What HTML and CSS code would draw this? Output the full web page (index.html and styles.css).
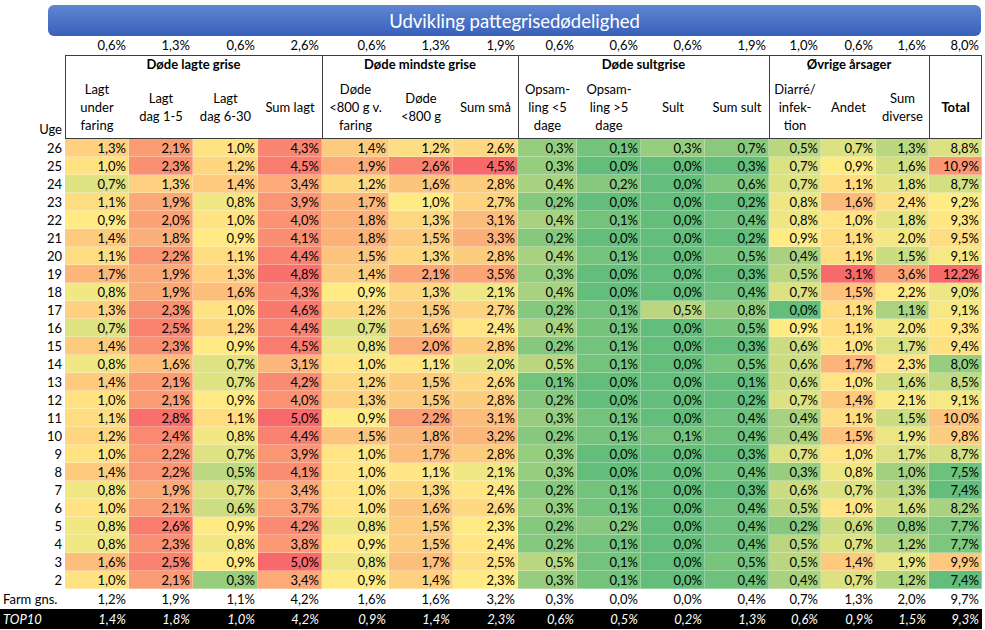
FILE: index.html
```html
<!DOCTYPE html>
<html lang="da">
<head>
<meta charset="utf-8">
<title>Udvikling pattegrisedødelighed</title>
<link rel="stylesheet" href="styles.css">
</head>
<body>
<div class="title">Udvikling pattegrisedødelighed</div>
<table class="grid">
<colgroup>
<col class="w65"><col class="w64"><col class="w64"><col class="w65"><col class="w64">
<col class="w67"><col class="w64"><col class="w65">
<col class="w59"><col class="w64"><col class="w64"><col class="w64">
<col class="w52"><col class="w55"><col class="w53"><col class="w53">
</colgroup>
<thead>
<tr class="avg"><th></th><td>0,6%</td><td>1,3%</td><td>0,6%</td><td>2,6%</td><td>0,6%</td><td>1,3%</td><td>1,9%</td><td>0,6%</td><td>0,6%</td><td>0,6%</td><td>1,9%</td><td>1,0%</td><td>0,6%</td><td>1,6%</td><td>8,0%</td></tr>
<tr class="groups"><th></th><th colspan="4" class="grp">Døde lagte grise</th><th colspan="3" class="grp">Døde mindste grise</th><th colspan="4" class="grp">Døde sultgrise</th><th colspan="3" class="grp">Øvrige årsager</th><th class="grp end"></th></tr>
<tr class="subs"><th class="uge">Uge</th>
<th class="sub first">Lagt<br>under<br>faring</th><th class="sub">Lagt<br>dag 1-5</th><th class="sub">Lagt<br>dag 6-30</th><th class="sub">Sum lagt</th>
<th class="sub first">Døde<br>&lt;800 g v.<br>faring</th><th class="sub">Døde<br>&lt;800 g</th><th class="sub">Sum små</th>
<th class="sub first">Opsam-<br>ling &lt;5<br>dage</th><th class="sub">Opsam-<br>ling &gt;5<br>dage</th><th class="sub">Sult</th><th class="sub">Sum sult</th>
<th class="sub first">Diarré/<br>infek-<br>tion</th><th class="sub">Andet</th><th class="sub">Sum<br>diverse</th>
<th class="sub first end total">Total</th></tr>
</thead>
<tbody class="heat">
<tr><th>26</th><td>1,3%</td><td>2,1%</td><td>1,0%</td><td>4,3%</td><td>1,4%</td><td>1,2%</td><td>2,6%</td><td>0,3%</td><td>0,1%</td><td>0,3%</td><td>0,7%</td><td>0,5%</td><td>0,7%</td><td>1,3%</td><td>8,8%</td></tr>
<tr><th>25</th><td>1,0%</td><td>2,3%</td><td>1,2%</td><td>4,5%</td><td>1,9%</td><td>2,6%</td><td>4,5%</td><td>0,3%</td><td>0,0%</td><td>0,0%</td><td>0,3%</td><td>0,7%</td><td>0,9%</td><td>1,6%</td><td>10,9%</td></tr>
<tr><th>24</th><td>0,7%</td><td>1,3%</td><td>1,4%</td><td>3,4%</td><td>1,2%</td><td>1,6%</td><td>2,8%</td><td>0,4%</td><td>0,2%</td><td>0,0%</td><td>0,6%</td><td>0,7%</td><td>1,1%</td><td>1,8%</td><td>8,7%</td></tr>
<tr><th>23</th><td>1,1%</td><td>1,9%</td><td>0,8%</td><td>3,9%</td><td>1,7%</td><td>1,0%</td><td>2,7%</td><td>0,2%</td><td>0,0%</td><td>0,0%</td><td>0,2%</td><td>0,8%</td><td>1,6%</td><td>2,4%</td><td>9,2%</td></tr>
<tr><th>22</th><td>0,9%</td><td>2,0%</td><td>1,0%</td><td>4,0%</td><td>1,8%</td><td>1,3%</td><td>3,1%</td><td>0,4%</td><td>0,1%</td><td>0,0%</td><td>0,4%</td><td>0,8%</td><td>1,0%</td><td>1,8%</td><td>9,3%</td></tr>
<tr><th>21</th><td>1,4%</td><td>1,8%</td><td>0,9%</td><td>4,1%</td><td>1,8%</td><td>1,5%</td><td>3,3%</td><td>0,2%</td><td>0,0%</td><td>0,0%</td><td>0,2%</td><td>0,9%</td><td>1,1%</td><td>2,0%</td><td>9,5%</td></tr>
<tr><th>20</th><td>1,1%</td><td>2,2%</td><td>1,1%</td><td>4,4%</td><td>1,5%</td><td>1,3%</td><td>2,8%</td><td>0,4%</td><td>0,1%</td><td>0,0%</td><td>0,5%</td><td>0,4%</td><td>1,1%</td><td>1,5%</td><td>9,1%</td></tr>
<tr><th>19</th><td>1,7%</td><td>1,9%</td><td>1,3%</td><td>4,8%</td><td>1,4%</td><td>2,1%</td><td>3,5%</td><td>0,3%</td><td>0,0%</td><td>0,0%</td><td>0,3%</td><td>0,5%</td><td>3,1%</td><td>3,6%</td><td>12,2%</td></tr>
<tr><th>18</th><td>0,8%</td><td>1,9%</td><td>1,6%</td><td>4,3%</td><td>0,9%</td><td>1,3%</td><td>2,1%</td><td>0,4%</td><td>0,0%</td><td>0,0%</td><td>0,4%</td><td>0,7%</td><td>1,5%</td><td>2,2%</td><td>9,0%</td></tr>
<tr><th>17</th><td>1,3%</td><td>2,3%</td><td>1,0%</td><td>4,6%</td><td>1,2%</td><td>1,5%</td><td>2,7%</td><td>0,2%</td><td>0,1%</td><td>0,5%</td><td>0,8%</td><td>0,0%</td><td>1,1%</td><td>1,1%</td><td>9,1%</td></tr>
<tr><th>16</th><td>0,7%</td><td>2,5%</td><td>1,2%</td><td>4,4%</td><td>0,7%</td><td>1,6%</td><td>2,4%</td><td>0,4%</td><td>0,1%</td><td>0,0%</td><td>0,5%</td><td>0,9%</td><td>1,1%</td><td>2,0%</td><td>9,3%</td></tr>
<tr><th>15</th><td>1,4%</td><td>2,3%</td><td>0,9%</td><td>4,5%</td><td>0,8%</td><td>2,0%</td><td>2,8%</td><td>0,2%</td><td>0,1%</td><td>0,0%</td><td>0,3%</td><td>0,6%</td><td>1,0%</td><td>1,7%</td><td>9,4%</td></tr>
<tr><th>14</th><td>0,8%</td><td>1,6%</td><td>0,7%</td><td>3,1%</td><td>1,0%</td><td>1,1%</td><td>2,0%</td><td>0,5%</td><td>0,1%</td><td>0,0%</td><td>0,5%</td><td>0,6%</td><td>1,7%</td><td>2,3%</td><td>8,0%</td></tr>
<tr><th>13</th><td>1,4%</td><td>2,1%</td><td>0,7%</td><td>4,2%</td><td>1,2%</td><td>1,5%</td><td>2,6%</td><td>0,1%</td><td>0,0%</td><td>0,0%</td><td>0,1%</td><td>0,6%</td><td>1,0%</td><td>1,6%</td><td>8,5%</td></tr>
<tr><th>12</th><td>1,0%</td><td>2,1%</td><td>0,9%</td><td>4,0%</td><td>1,3%</td><td>1,5%</td><td>2,8%</td><td>0,2%</td><td>0,0%</td><td>0,0%</td><td>0,2%</td><td>0,7%</td><td>1,4%</td><td>2,1%</td><td>9,1%</td></tr>
<tr><th>11</th><td>1,1%</td><td>2,8%</td><td>1,1%</td><td>5,0%</td><td>0,9%</td><td>2,2%</td><td>3,1%</td><td>0,3%</td><td>0,1%</td><td>0,0%</td><td>0,4%</td><td>0,4%</td><td>1,1%</td><td>1,5%</td><td>10,0%</td></tr>
<tr><th>10</th><td>1,2%</td><td>2,4%</td><td>0,8%</td><td>4,4%</td><td>1,5%</td><td>1,8%</td><td>3,2%</td><td>0,2%</td><td>0,1%</td><td>0,1%</td><td>0,4%</td><td>0,4%</td><td>1,5%</td><td>1,9%</td><td>9,8%</td></tr>
<tr><th>9</th><td>1,0%</td><td>2,2%</td><td>0,7%</td><td>3,9%</td><td>1,0%</td><td>1,7%</td><td>2,8%</td><td>0,3%</td><td>0,0%</td><td>0,0%</td><td>0,3%</td><td>0,7%</td><td>1,0%</td><td>1,7%</td><td>8,7%</td></tr>
<tr><th>8</th><td>1,4%</td><td>2,2%</td><td>0,5%</td><td>4,1%</td><td>1,0%</td><td>1,1%</td><td>2,1%</td><td>0,3%</td><td>0,0%</td><td>0,0%</td><td>0,4%</td><td>0,3%</td><td>0,8%</td><td>1,0%</td><td>7,5%</td></tr>
<tr><th>7</th><td>0,8%</td><td>1,9%</td><td>0,7%</td><td>3,4%</td><td>1,0%</td><td>1,3%</td><td>2,4%</td><td>0,2%</td><td>0,1%</td><td>0,0%</td><td>0,3%</td><td>0,6%</td><td>0,7%</td><td>1,3%</td><td>7,4%</td></tr>
<tr><th>6</th><td>1,0%</td><td>2,1%</td><td>0,6%</td><td>3,7%</td><td>1,0%</td><td>1,6%</td><td>2,6%</td><td>0,3%</td><td>0,1%</td><td>0,0%</td><td>0,4%</td><td>0,5%</td><td>1,0%</td><td>1,6%</td><td>8,2%</td></tr>
<tr><th>5</th><td>0,8%</td><td>2,6%</td><td>0,9%</td><td>4,2%</td><td>0,8%</td><td>1,5%</td><td>2,3%</td><td>0,2%</td><td>0,2%</td><td>0,0%</td><td>0,4%</td><td>0,2%</td><td>0,6%</td><td>0,8%</td><td>7,7%</td></tr>
<tr><th>4</th><td>0,8%</td><td>2,3%</td><td>0,8%</td><td>3,8%</td><td>0,9%</td><td>1,5%</td><td>2,4%</td><td>0,2%</td><td>0,1%</td><td>0,0%</td><td>0,4%</td><td>0,5%</td><td>0,7%</td><td>1,2%</td><td>7,7%</td></tr>
<tr><th>3</th><td>1,6%</td><td>2,5%</td><td>0,9%</td><td>5,0%</td><td>0,8%</td><td>1,7%</td><td>2,5%</td><td>0,5%</td><td>0,1%</td><td>0,0%</td><td>0,5%</td><td>0,5%</td><td>1,4%</td><td>1,9%</td><td>9,9%</td></tr>
<tr><th>2</th><td>1,0%</td><td>2,1%</td><td>0,3%</td><td>3,4%</td><td>0,9%</td><td>1,4%</td><td>2,3%</td><td>0,3%</td><td>0,1%</td><td>0,0%</td><td>0,4%</td><td>0,4%</td><td>0,7%</td><td>1,2%</td><td>7,4%</td></tr>
</tbody>
<tfoot>
<tr class="farm"><th>Farm gns.</th><td>1,2%</td><td>1,9%</td><td>1,1%</td><td>4,2%</td><td>1,6%</td><td>1,6%</td><td>3,2%</td><td>0,3%</td><td>0,0%</td><td>0,0%</td><td>0,4%</td><td>0,7%</td><td>1,3%</td><td>2,0%</td><td>9,7%</td></tr>
<tr class="top10"><th>TOP10</th><td>1,4%</td><td>1,8%</td><td>1,0%</td><td>4,2%</td><td>0,9%</td><td>1,4%</td><td>2,3%</td><td>0,6%</td><td>0,5%</td><td>0,2%</td><td>1,3%</td><td>0,6%</td><td>0,9%</td><td>1,5%</td><td>9,3%</td></tr>
</tfoot>
</table>
<script src="script.js"></script>
</body>
</html>
```

FILE: styles.css
```css
html, body {
  margin: 0;
  padding: 0;
  background: #ffffff;
}
body {
  font-family: Lato, "Liberation Sans", sans-serif;
  font-size: 13px;
  color: #000000;
}
.title {
  margin: 5px 0 0 48px;
  width: 933px;
  height: 31px;
  border-radius: 6px;
  background: linear-gradient(#5d86d2, #3960ba);
  color: #ffffff;
  font-size: 18.5px;
  display: flex;
  align-items: center;
  justify-content: center;
}
.grid {
  border-collapse: separate;
  border-spacing: 0;
  table-layout: fixed;
  width: 982px;
}
.w52 { width: 52px; }
.w53 { width: 53px; }
.w55 { width: 55px; }
.w59 { width: 59px; }
.w64 { width: 64px; }
.w65 { width: 65px; }
.w67 { width: 67px; }
.grid th, .grid td {
  padding: 0;
  font-weight: normal;
  white-space: nowrap;
  overflow: hidden;
}
.grid td {
  text-align: right;
  padding-right: 3px;
}
.avg td, .avg th {
  height: 19px;
  line-height: 19px;
}
.groups th {
  height: 19px;
  line-height: 19px;
  font-weight: bold;
  text-align: center;
}
.grp {
  box-shadow: inset 1px 1px 0 #3c3c3c;
}
.grp.end {
  box-shadow: inset 1px 1px 0 #3c3c3c, inset -1px 0 0 #3c3c3c;
}
.subs th {
  height: 64px;
  line-height: 18px;
  text-align: center;
  vertical-align: middle;
}
.sub {
  box-shadow: inset 0 -1px 0 #3c3c3c;
}
.sub.first {
  box-shadow: inset 1px -1px 0 #3c3c3c;
}
.sub.first.end {
  box-shadow: inset 1px -1px 0 #3c3c3c, inset -1px 0 0 #3c3c3c;
}
.sub.total {
  font-weight: bold;
}
.subs .uge {
  text-align: right;
  vertical-align: bottom;
  padding: 0 3px 1px 0;
}
.heat th, .heat td {
  height: 18px;
  line-height: 18px;
}
.heat th {
  text-align: right;
  padding-right: 3px;
}
.heat td {
  box-shadow: inset -1px -1px 0 rgba(255, 255, 255, 0.3);
}
.farm th, .farm td,
.top10 th, .top10 td {
  height: 20px;
  line-height: 20px;
}
.farm th, .top10 th {
  text-align: left;
  padding-left: 3px;
}
.top10 th, .top10 td {
  background: #000000;
  color: #ffffff;
  font-style: italic;
}
```

FILE: script.js
```js
(function () {
  var G = [99, 190, 123], Y = [255, 235, 132], R = [248, 105, 107];
  var P = [
    [0, 0.88, 2.9], [0, 0.88, 2.9], [0, 0.88, 2.9], [0, 1.8, 5.0],
    [0, 0.9, 2.9], [0, 1.0, 3.0], [0.3, 2.3, 4.5],
    [0, 0.9, 2.9], [0, 0.9, 2.9], [0, 0.9, 2.9], [0.3, 1.9, 3.9],
    [0, 0.9, 2.9], [0, 0.9, 2.8], [0.2, 2.15, 4.75],
    [7.4, 9.2, 11.8]
  ];
  function mix(a, b, t) {
    t = Math.max(0, Math.min(1, t));
    return 'rgb(' + [0, 1, 2].map(function (i) {
      return Math.round(a[i] + (b[i] - a[i]) * t);
    }).join(',') + ')';
  }
  var rows = document.querySelectorAll('.heat tr');
  rows.forEach(function (tr) {
    tr.querySelectorAll('td').forEach(function (td, i) {
      var v = parseFloat(td.textContent.replace(',', '.'));
      var p = P[i];
      td.style.backgroundColor = v <= p[1]
        ? mix(G, Y, (v - p[0]) / (p[1] - p[0]))
        : mix(Y, R, (v - p[1]) / (p[2] - p[1]));
    });
  });
})();
```
